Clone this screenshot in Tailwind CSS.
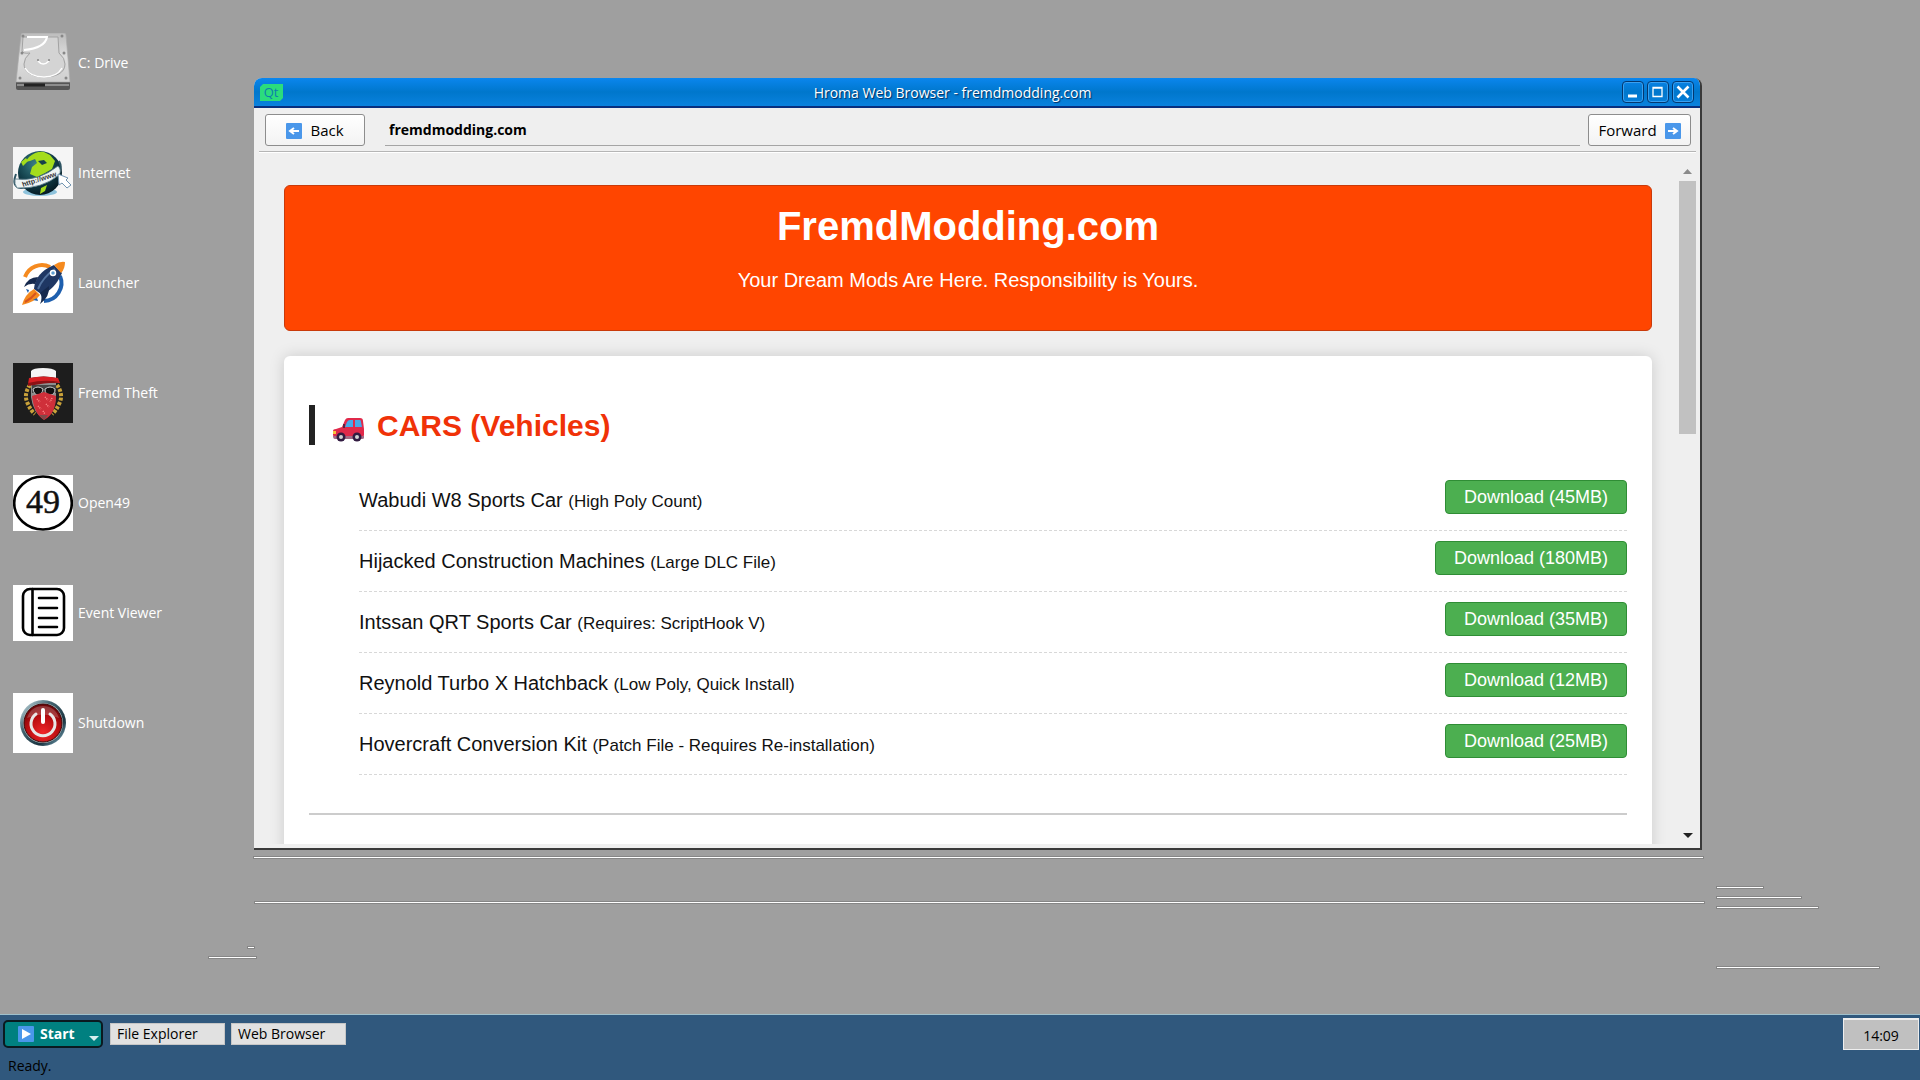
<!DOCTYPE html>
<html lang="en">
<head>
    <meta charset="UTF-8">
    <meta name="viewport" content="width=device-width, initial-scale=1.0">
    <title>Hroma Web Browser - fremdmodding.com</title>
    <script src="https://cdn.jsdelivr.net/npm/@tailwindcss/browser@4"></script>
</head>
<body class="h-screen flex flex-col overflow-hidden bg-[#9f9f9f] text-sm text-black font-['Open_Sans','Noto_Sans',sans-serif]">
    <main class="relative flex-1 min-h-0">
        <!-- Desktop shortcuts -->
        <nav class="flex flex-col w-[200px] pt-2 pl-[13px] text-white">
            <a href="#drive" class="flex items-center gap-[5px] h-[110px]">
                <svg class="w-[60px] h-[60px]" viewBox="0 0 60 60">
                    <defs>
                        <linearGradient id="metal" x1="0" y1="0" x2="0" y2="1"><stop offset="0" stop-color="#bdbdbd"/><stop offset=".5" stop-color="#dedede"/><stop offset="1" stop-color="#cfcfcf"/></linearGradient>
                    </defs>
                    <path d="M3 49h54v6q0 2-2 2H5q-2 0-2-2z" fill="#555"/>
                    <path d="M4 52h52" stroke="#8d8d8d" stroke-width="2"/>
                    <path d="M11 52h21" stroke="#222" stroke-width="3"/>
                    <path d="M8 2q0-2 2-2h41q2 0 2 2l4 47H3z" fill="url(#metal)" stroke="#aaa" stroke-width=".7"/>
                    <path d="M10 4h35l1 16q6 5 6 11c0 9-9 13-21 13S11 39 11 31q0-6 6-11-7 1-8-2z" fill="#d4d4d4" stroke="#a2a2a2" stroke-width="1"/>
                    <path d="M11 17Q32 15 34 4H14" fill="none" stroke="#fff" stroke-width="2"/>
                    <path d="M12 35q5 9 19 9 13 0 18-9" fill="none" stroke="#fff" stroke-width="1.5"/>
                    <path d="M25 28q5 6 11 0" fill="none" stroke="#fff" stroke-width="1.5"/>
                    <g fill="#888"><circle cx="10" cy="3" r="1.5"/><circle cx="49" cy="3" r="1.5"/><circle cx="9" cy="20" r="1.5"/><circle cx="51" cy="20" r="1.5"/><circle cx="7" cy="45" r="1.5"/><circle cx="53" cy="45" r="1.5"/><circle cx="25" cy="27" r="1"/><circle cx="36" cy="27" r="1"/></g>
                </svg>
                <span>C: Drive</span>
            </a>
            <a href="#internet" class="flex items-center gap-[5px] h-[110px]">
                <svg class="w-[60px] h-[52px] bg-[#f5f5f5]" viewBox="0 0 60 52">
                    <defs>
                        <radialGradient id="globe" cx=".4" cy=".3" r=".7"><stop offset="0" stop-color="#3a7f86"/><stop offset=".6" stop-color="#123f4a"/><stop offset="1" stop-color="#061c26"/></radialGradient>
                    </defs>
                    <ellipse cx="27" cy="45" rx="17" ry="4" fill="#8ec3dc"/>
                    <circle cx="27" cy="26" r="22" fill="url(#globe)"/>
                    <path d="M16 10q7-6 15-5l6 3 5 6-3 8-7 4-8 4-7-3 2-7 5-4-2-4-5 2-5 1z" fill="#a4dc1c"/>
                    <path d="M25 14l6-1 3 3-5 2z" fill="#16414a"/>
                    <path d="M8 15l5-4 2 3-5 5zM28 41l6-3-2 6-5 3z" fill="#a4dc1c"/>
                    <path d="M3 27q-5 13 5 14 20-1 37-14 5-6 1-13" fill="none" stroke="#2f5563" stroke-width="2"/>
                    <path d="M2 32q23 3 43-13 4 4 1 9Q29 42 4 41 1 37 2 32z" fill="#eef4f5" stroke="#537582" stroke-width=".8"/>
                    <text x="10" y="40" font-family="Liberation Sans, sans-serif" font-size="7" font-weight="bold" fill="#333" transform="rotate(-18 10 40)">http://www</text>
                    <path d="M45 27l10 4-2 2 5 5-4 3-5-5-3 2z" fill="#fff" stroke="#6f93b0" stroke-width="1"/>
                </svg>
                <span>Internet</span>
            </a>
            <a href="#launcher" class="flex items-center gap-[5px] h-[110px]">
                <svg class="w-[60px] h-[60px] bg-white" viewBox="0 0 60 60">
                    <path d="M12 24a18 18 0 0 1 25-10" fill="none" stroke="#f58a1f" stroke-width="4"/>
                    <path d="M47 23a18 18 0 0 1-16 25" fill="none" stroke="#1e5fae" stroke-width="4"/>
                    <path d="M21 36Q22 20 41 12l8 8Q41 38 28 41z" fill="#1f3763"/>
                    <path d="M25 36Q30 24 42 16" fill="none" stroke="#53739f" stroke-width="2"/>
                    <path d="M41 12q6-4 11-3 0 7-4 11z" fill="#f58a1f"/>
                    <circle cx="40" cy="20" r="2.500" fill="#5f9fd2" stroke="#fff" stroke-width="1.5"/>
                    <path d="M25 24q-10 0-14 10 5-4 11-3zM36 33q1 11-9 18 3-6 0-11z" fill="#16294d"/>
                    <path d="M21 36l6 6q-5 7-18 10 3-11 12-16z" fill="#f58a1f"/>
                    <path d="M23 40q-5 6-11 9" stroke="#d7541e" stroke-width="2" fill="none"/>
                    <path d="M13 36l3 1-1 3zM20 47l4-2 1 3z" fill="#1e5fae"/>
                </svg>
                <span>Launcher</span>
            </a>
            <a href="#fremd-theft" class="flex items-center gap-[5px] h-[110px]">
                <svg class="w-[60px] h-[60px] bg-[#1d1d1d]" viewBox="0 0 60 60">
                    <path d="M17 22q-7 10-2 19 3 7 7 10M44 22q7 10 2 19-3 7-7 10" fill="none" stroke="#c9a23a" stroke-width="4" stroke-dasharray="3 1.500"/>
                    <path d="M18 20h25v14q-1 16-12 22-11-6-13-22z" fill="#8d8d8d"/>
                    <path d="M19 22h24v8H19z" fill="#444"/>
                    <path d="M20 26q5-4 10 0-1 6-5 6t-5-6zM32 26q5-4 10 0 0 6-5 6t-5-6z" fill="#111" stroke="#ccc"/>
                    <path d="M19 33l12-4 12 4q0 18-12 24-10-6-12-24z" fill="#cf2f3a"/>
                    <path d="M24 36l3 3m5-5l3 3m-10 6l3 3m5-5l3 3m-6 4l2 3M39 35l-2 4" stroke="#ff8c8c" stroke-width="1.5" stroke-dasharray="1 1"/>
                    <path d="M26 52l5 5 4-5" fill="#7c4a4a"/>
                    <path d="M18 14V8q2-3 12-3t13 3v7q-12-3-25 0z" fill="#f5f5f5"/>
                    <path d="M16 15q14-3 29 0l2 5q-16-2-32 1z" fill="#d81f24"/>
                    <path d="M15 20q16-4 32-1-16 1-32 4z" fill="#8d1115"/>
                </svg>
                <span>Fremd Theft</span>
            </a>
            <a href="#open49" class="flex items-center gap-[5px] h-[110px]">
                <svg class="w-[60px] h-[56px] bg-white" viewBox="0 0 60 56">
                    <ellipse cx="30" cy="28" rx="28.800" ry="26.500" fill="none" stroke="#000" stroke-width="2.600"/>
                    <text x="30" y="38" text-anchor="middle" font-family="Liberation Serif, serif" font-size="34" fill="#111" stroke="#111" stroke-width=".5">49</text>
                </svg>
                <span>Open49</span>
            </a>
            <a href="#events" class="flex items-center gap-[5px] h-[110px]">
                <svg class="w-[60px] h-[56px] bg-white" viewBox="0 0 60 56" fill="none" stroke="#000" stroke-width="2.600" stroke-linecap="round">
                    <rect x="10" y="4" width="41" height="46" rx="7"/>
                    <path d="M19.500 4v46M26 13h18M26 23h18M26 33h18M26 42h18"/>
                </svg>
                <span>Event Viewer</span>
            </a>
            <a href="#shutdown" class="flex items-center gap-[5px] h-[110px]">
                <svg class="w-[60px] h-[60px] bg-white" viewBox="0 0 60 60">
                    <defs>
                        <radialGradient id="power" cx=".5" cy=".75" r=".7"><stop offset="0" stop-color="#f0262a"/><stop offset=".6" stop-color="#b80d10"/><stop offset="1" stop-color="#6e0508"/></radialGradient>
                        <linearGradient id="ring" x1="0" y1="0" x2="1" y2="1"><stop offset="0" stop-color="#d8edf2"/><stop offset=".35" stop-color="#466773"/><stop offset=".7" stop-color="#1a3440"/><stop offset="1" stop-color="#8dc1d6"/></linearGradient>
                    </defs>
                    <circle cx="30" cy="30" r="23" fill="url(#ring)"/>
                    <circle cx="30" cy="30" r="20" fill="#a9b7bb"/>
                    <circle cx="30" cy="30" r="19" fill="url(#power)" stroke="#3b0506"/>
                    <path d="M14 25q4-12 16-12t16 12q-16-7-32 0z" fill="#fff" opacity=".2"/>
                    <path d="M23 21a12 12 0 1 0 14 0" fill="none" stroke="#e8e8e8" stroke-width="3" stroke-linecap="round"/>
                    <path d="M30 17v12" stroke="#fff" stroke-width="4" stroke-linecap="round"/>
                </svg>
                <span>Shutdown</span>
            </a>
        </nav>

        <!-- Stray highlight lines left on the wallpaper -->
        <i class="absolute left-[254px] right-[217px] top-[857px] h-px bg-white shadow-[0_0_0_1px_#868686]"></i>
        <i class="absolute left-[255px] right-[216px] top-[902px] h-px bg-white shadow-[0_0_0_1px_#868686]"></i>
        <i class="absolute left-[248px] w-[6px] top-[947px] h-px bg-white shadow-[0_0_0_1px_#868686]"></i>
        <i class="absolute left-[209px] w-[47px] top-[957px] h-px bg-white shadow-[0_0_0_1px_#868686]"></i>
        <i class="absolute left-[1717px] w-[46px] top-[887px] h-px bg-white shadow-[0_0_0_1px_#868686]"></i>
        <i class="absolute left-[1717px] w-[84px] top-[897px] h-px bg-white shadow-[0_0_0_1px_#868686]"></i>
        <i class="absolute left-[1717px] w-[101px] top-[907px] h-px bg-white shadow-[0_0_0_1px_#868686]"></i>
        <i class="absolute left-[1717px] w-[162px] top-[967px] h-px bg-white shadow-[0_0_0_1px_#868686]"></i>

        <!-- Browser window -->
        <section class="absolute left-[254px] right-[218px] top-[78px] bottom-[164px] flex flex-col bg-[#efefef] rounded-t-lg overflow-hidden border-b-2 border-r-2 border-[#3a3a3a]">
            <header class="-mr-[2px] flex items-center h-[30px] shrink-0 pl-[6px] pr-2 bg-linear-to-b from-[#0b86ee] via-[#0077cc] to-[#0a82de] border-b-2 border-[#08307f]">
                <svg class="w-[23px] h-[17px]" viewBox="0 0 23 17">
                    <path d="M3 0h20v14l-3 3H0V3z" fill="#2bdc7c"/>
                    <text x="11" y="13" text-anchor="middle" font-family="Open Sans, sans-serif" font-size="13" fill="#0b7fae">Qt</text>
                </svg>
                <h1 class="flex-1 pt-[2px] text-center text-white [text-shadow:1px_1px_1px_#002a5c]">Hroma Web Browser - fremdmodding.com</h1>
                <div class="flex gap-[3px]">
                    <button type="button" aria-label="Minimize" class="w-[22px] h-[22px] rounded-[4px] border border-[#04386f] shadow-[inset_0_0_0_1px_#3ba0f0]">
                        <svg class="w-5 h-5" viewBox="0 0 20 20"><path d="M5 14h9" stroke="#fff" stroke-width="3"/></svg>
                    </button>
                    <button type="button" aria-label="Maximize" class="w-[22px] h-[22px] rounded-[4px] border border-[#04386f] shadow-[inset_0_0_0_1px_#3ba0f0]">
                        <svg class="w-5 h-5" viewBox="0 0 20 20"><path d="M5 5.500h9v9H5zM5 6h9" fill="none" stroke="#fff" stroke-width="1.300"/></svg>
                    </button>
                    <button type="button" aria-label="Close" class="w-[22px] h-[22px] rounded-[4px] border border-[#04386f] shadow-[inset_0_0_0_1px_#3ba0f0]">
                        <svg class="w-5 h-5" viewBox="0 0 20 20"><path d="M4.500 4.500l11 11m0-11l-11 11" stroke="#fff" stroke-width="2.600"/></svg>
                    </button>
                </div>
            </header>

            <form class="flex items-start shrink-0 h-[44px] ml-[5px] mr-1 pt-[6px] pl-[6px] pr-[5px] border-b border-[#b5b5b5] shadow-[0_1px_0_#fff]">
                <button type="button" class="flex items-center justify-center gap-2 w-[100px] h-8 pt-px text-[15px] rounded-[3px] border border-[#8d8d8d] bg-linear-to-b from-white to-[#f3f3f3]">
                    <svg class="w-4 h-4" viewBox="0 0 16 16"><rect width="16" height="16" rx="1" fill="#4a97ea"/><path d="M13 8H4m4-3L4 8l4 3" fill="none" stroke="#fff" stroke-width="2"/></svg>
                    <span>Back</span>
                </button>
                <input type="text" aria-label="Address" value="fremdmodding.com" class="flex-1 min-w-0 h-8 ml-5 mr-2 px-1 font-bold bg-transparent border-b border-[#a5a5a5] outline-none">
                <button type="button" class="flex items-center justify-center gap-2 w-[103px] h-8 pt-px text-[15px] rounded-[3px] border border-[#8d8d8d] bg-linear-to-b from-white to-[#f3f3f3]">
                    <span>Forward</span>
                    <svg class="w-4 h-4" viewBox="0 0 16 16"><rect width="16" height="16" rx="1" fill="#4a97ea"/><path d="M3 8h9M8 5l4 3-4 3" fill="none" stroke="#fff" stroke-width="2"/></svg>
                </button>
            </form>

            <div class="flex flex-1 min-h-0 mb-1">
                <div class="flex-1 min-w-0 overflow-hidden pt-[33px] pl-[30px] pr-[27px] font-['Liberation_Sans',Arial,sans-serif] text-xl text-[#111]">
                    <div class="h-[146px] pt-[17px] text-center text-white bg-[#ff4500] border border-[#c93a0a] rounded-md">
                        <h2 class="text-[40px] leading-[46px] font-bold">FremdModding.com</h2>
                        <p class="mt-[19px] leading-6">Your Dream Mods Are Here. Responsibility is Yours.</p>
                    </div>
                    <div class="mt-[25px] px-[25px] pt-[49px] pb-40 bg-white rounded-md shadow-[0_0_15px_rgba(0,0,0,0.15)]">
                        <h3 class="flex items-center gap-3 h-10 pl-[18px] border-l-6 border-[#222] text-[30px] font-bold text-[#f03208]">
                            <svg class="w-8 h-8 mt-[5px]" viewBox="0 0 32 32">
                                <path d="M9 15l3-7q1-2 3-2h12q3 0 3 3l1 8v6q0 2-2 2H2q-2 0-2-2v-4q0-2 3-2z" fill="#e0294a"/>
                                <path d="M12 15l2-5q1-2 3-2h3v7zM22 8h5q1 0 1 2l1 5h-7z" fill="#47a9e8"/>
                                <path d="M10 16v-4h2v4z" fill="#5b2140"/>
                                <path d="M0 19h3v3H0z" fill="#f9c23c"/>
                                <path d="M0 24h31v2q0 1-2 1H2q-2 0-2-3z" fill="#a56a86"/>
                                <circle cx="8" cy="25" r="4.500" fill="#321b41"/><circle cx="8" cy="25" r="2" fill="#d3d3d3"/>
                                <circle cx="24" cy="25" r="4.500" fill="#321b41"/><circle cx="24" cy="25" r="2" fill="#d3d3d3"/>
                            </svg>
                            <span class="pt-[2px]">CARS (Vehicles)</span>
                        </h3>
                        <ul class="mt-[25px] ml-[50px] leading-10">
                            <li class="flex items-start justify-between h-[61px] pt-[10px] border-b border-dashed border-[#d8d8d8]">
                                <span>Wabudi W8 Sports Car <small class="text-[17px]">(High Poly Count)</small></span>
                                <button type="button" class="h-[34px] px-[18px] text-lg leading-8 text-white bg-[#4caf50] border border-[#2f8d35] rounded-[4px]">Download (45MB)</button>
                            </li>
                            <li class="flex items-start justify-between h-[61px] pt-[10px] border-b border-dashed border-[#d8d8d8]">
                                <span>Hijacked Construction Machines <small class="text-[17px]">(Large DLC File)</small></span>
                                <button type="button" class="h-[34px] px-[18px] text-lg leading-8 text-white bg-[#4caf50] border border-[#2f8d35] rounded-[4px]">Download (180MB)</button>
                            </li>
                            <li class="flex items-start justify-between h-[61px] pt-[10px] border-b border-dashed border-[#d8d8d8]">
                                <span>Intssan QRT Sports Car <small class="text-[17px]">(Requires: ScriptHook V)</small></span>
                                <button type="button" class="h-[34px] px-[18px] text-lg leading-8 text-white bg-[#4caf50] border border-[#2f8d35] rounded-[4px]">Download (35MB)</button>
                            </li>
                            <li class="flex items-start justify-between h-[61px] pt-[10px] border-b border-dashed border-[#d8d8d8]">
                                <span>Reynold Turbo X Hatchback <small class="text-[17px]">(Low Poly, Quick Install)</small></span>
                                <button type="button" class="h-[34px] px-[18px] text-lg leading-8 text-white bg-[#4caf50] border border-[#2f8d35] rounded-[4px]">Download (12MB)</button>
                            </li>
                            <li class="flex items-start justify-between h-[61px] pt-[10px] border-b border-dashed border-[#d8d8d8]">
                                <span>Hovercraft Conversion Kit <small class="text-[17px]">(Patch File - Requires Re-installation)</small></span>
                                <button type="button" class="h-[34px] px-[18px] text-lg leading-8 text-white bg-[#4caf50] border border-[#2f8d35] rounded-[4px]">Download (25MB)</button>
                            </li>
                        </ul>
                        <hr class="mt-[38px] border-t-2 border-[#ccc]">
                    </div>
                </div>
                <!-- Scrollbar -->
                <div class="flex flex-col items-center w-[17px] mr-1 pt-[17px] pb-[6px]">
                    <svg class="w-[9px] h-[5px]" viewBox="0 0 9 5"><path d="M0 5L4.500 0 9 5z" fill="#8a8a8a"/></svg>
                    <div class="w-full h-[253px] mt-[7px] bg-[#c1c1c1]"></div>
                    <svg class="w-[10px] h-[5px] mt-auto" viewBox="0 0 10 5"><path d="M0 0l5 5 5-5z" fill="#222"/></svg>
                </div>
            </div>
        </section>
    </main>

    <!-- Taskbar -->
    <footer class="shrink-0 h-[66px] bg-[#30587d] border-t border-[#9fc0cc]">
        <div class="flex items-start h-[38px] pl-[3px]">
            <button type="button" class="flex items-center w-[100px] h-7 mt-[5px] pl-[13px] rounded-[5px] border-2 border-[#0a1a20] bg-[#008080] font-bold text-white">
                <svg class="w-4 h-4" viewBox="0 0 16 16"><rect width="16" height="16" rx="1" fill="#4a97ea"/><path d="M4 3l9 5-9 5z" fill="#fff"/></svg>
                <span class="ml-[6px]">Start</span>
                <svg class="w-[10px] h-[5px] ml-auto mr-[2px] mt-2" viewBox="0 0 10 5"><path d="M0 0l5 5 5-5z" fill="#d5eeee"/></svg>
            </button>
            <button type="button" class="w-[115px] h-[22px] mt-2 ml-[7px] pl-[6px] text-left leading-5 bg-[#e1e1e1] border border-[#c6c6c6]">File Explorer</button>
            <button type="button" class="w-[115px] h-[22px] mt-2 ml-[6px] pl-[6px] text-left leading-5 bg-[#e1e1e1] border border-[#c6c6c6]">Web Browser</button>
            <time class="w-[76px] h-8 mt-[3px] ml-auto mr-px text-center leading-8 bg-[#c0c0c0] border border-t-2 border-[#eee]">14:09</time>
        </div>
        <p class="pl-2 leading-[26px]">Ready.</p>
    </footer>
</body>
</html>
